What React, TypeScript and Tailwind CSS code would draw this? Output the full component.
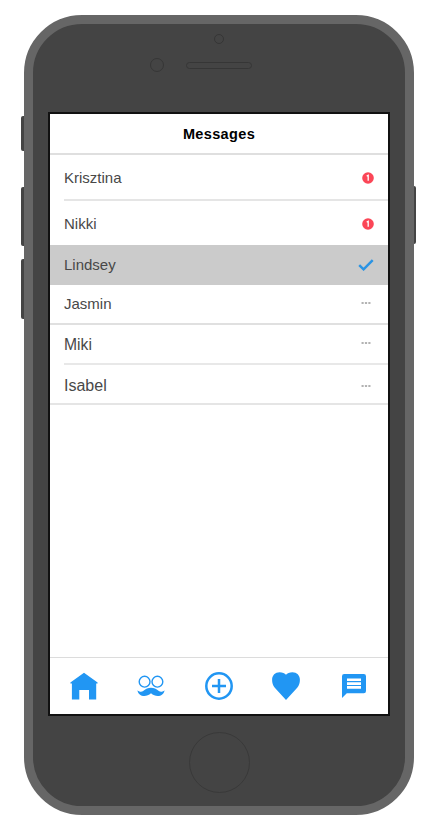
import type { ReactNode } from "react";

function Unread() {
  return (
    <svg width="12" height="12" viewBox="0 0 12 12" className="mr-px">
      <circle cx="6" cy="6" r="5.8" fill="#fb4657" />
      <path d="M4.7 4.1 6.2 3.3V8.8" fill="none" stroke="#fff" strokeWidth="1.3" />
    </svg>
  );
}

function Check() {
  return (
    <svg width="16" height="12" viewBox="0 0 16 12" className="mr-px" fill="none">
      <path d="M1.2 6.1 5.6 10.3 14.7 1.2" stroke="#2b94e4" strokeWidth="2.5" />
    </svg>
  );
}

function Dots({ className = "" }: { className?: string }) {
  return (
    <svg width="10" height="4" viewBox="0 0 10 4" className={`mr-1 ${className}`} fill="#b2b2b2">
      <rect x="0.5" y="1" width="2.2" height="2" rx="0.5" />
      <rect x="3.9" y="1" width="2.2" height="2" rx="0.5" />
      <rect x="7.3" y="1" width="2.2" height="2" rx="0.5" />
    </svg>
  );
}

function Row({ name, row, line, text = "text-[15px]", children }: { name: string; row: string; line: string; text?: string; children: ReactNode }) {
  return (
    <div className={`flex shrink-0 flex-col ${row}`}>
      <div className="flex flex-1 items-center justify-between pl-[14px] pr-[13px]">
        <span className={`leading-4 text-[#484848] ${text}`}>{name}</span>
        {children}
      </div>
      <div className={line} />
    </div>
  );
}

function Tab({ children }: { children: ReactNode }) {
  return <div className="flex w-[67.5px] items-center justify-center">{children}</div>;
}

export default function App() {
  return (
    <div className="h-[832px] w-[444px] overflow-hidden bg-white pl-6 pt-[15px] font-['Liberation_Sans',Arial,sans-serif]">
      <div className="relative h-[800px] w-[390px] rounded-[58px] border-[9px] border-[#666] bg-[#444]">
        <div className="absolute -left-3 top-[92px] h-[35px] w-[3px] rounded-l-[2px] bg-[#444]" />
        <div className="absolute -left-3 top-[163px] h-[59px] w-[3px] rounded-l-[2px] bg-[#444]" />
        <div className="absolute -left-3 top-[235px] h-[60px] w-[3px] rounded-l-[2px] bg-[#444]" />
        <div className="absolute -right-[11px] top-[162px] h-[58px] w-[2px] rounded-r-[2px] bg-[#444]" />

        <div className="flex h-[88px] flex-col items-center pt-[10px]">
          <div className="size-[10px] rounded-full border border-[#363636]" />
          <div className="mt-[14px] flex w-full items-center pl-[117px]">
            <div className="size-[14px] rounded-full border border-[#363636]" />
            <div className="ml-[22px] h-[7px] w-[66px] rounded-full border border-[#363636]" />
          </div>
        </div>

        <div className="ml-[15px] flex h-[604px] w-[342px] flex-col border-2 border-[#111] bg-white">
          <div className="flex h-[41px] shrink-0 items-center justify-center border-b-2 border-[#dfdfdf]">
            <h1 className="text-[14.5px] font-bold leading-4 tracking-[0.36px] text-black">Messages</h1>
          </div>
          <div className="flex flex-1 flex-col">
            <Row name="Krisztina" row="h-[46px] pt-px" line="ml-[14px] h-[2px] bg-[#e5e5e5]"><Unread /></Row>
            <Row name="Nikki" row="h-[44px] pt-px" line="h-0"><Unread /></Row>
            <Row name="Lindsey" row="h-10 bg-[#cbcbcb]" line="h-0"><Check /></Row>
            <Row name="Jasmin" row="h-10" line="h-[2px] bg-[#e0e0e0]"><Dots className="mb-0.5" /></Row>
            <Row name="Miki" row="h-10 pt-px" line="ml-[14px] h-[2px] bg-[#e8e8e8]" text="text-[15.7px] pt-px"><Dots className="mb-[3px]" /></Row>
            <Row name="Isabel" row="h-10" line="h-[2px] bg-[#e5e5e5]" text="text-[16px] pt-[3px]"><Dots className="mt-[3px]" /></Row>
          </div>
          <nav className="flex h-[57px] shrink-0 border-t border-[#dcdcdc]">
            <Tab>
              <svg width="28" height="28" viewBox="0 0 28 28" fill="#2196f3">
                <path d="M14 .8 27.6 10.6V11.6H26.2V27.5H19V18H9.3V27.5H1.9V11.6H.4V10.6Z" />
              </svg>
            </Tab>
            <Tab>
              <svg width="28" height="22" viewBox="0 0 28 22" fill="none" stroke="#2196f3">
                <circle cx="7.6" cy="6.7" r="5.4" strokeWidth="1.4" />
                <circle cx="20.4" cy="6.7" r="5.4" strokeWidth="1.4" />
                <path d="M14 12.8C11 12.8 8.8 13.8 6.5 15.8 4.5 17.2 2.2 16.9.4 15.2 1.3 21.3 8.8 23 14 18.2 19.2 23 26.7 21.3 27.6 15.2 25.8 16.9 23.5 17.2 21.5 15.8 19.2 13.8 17 12.8 14 12.8Z" fill="#2196f3" stroke="none" />
              </svg>
            </Tab>
            <Tab>
              <svg width="28" height="28" viewBox="0 0 28 28" fill="none" stroke="#2196f3" strokeWidth="2.5">
                <circle cx="14" cy="14" r="12.7" />
                <path d="M14 7v14M7 14h14" />
              </svg>
            </Tab>
            <Tab>
              <svg width="28" height="28" viewBox="0 0 28 28" fill="#2196f3">
                <path d="M14 28 2.8 15.8C.9 13.3.1 10.9.1 7.7.1 3.3 3.2.3 7.6.3 10.5.3 12.7 1.2 14 2.8 15.3 1.2 17.5.3 20.4.3 24.8.3 27.9 3.3 27.9 7.7 27.9 10.9 27.1 13.3 25.2 15.8Z" />
              </svg>
            </Tab>
            <Tab>
              <svg width="24" height="24" viewBox="0 0 24 24">
                <path d="M2.2 0H21.8Q24 0 24 2.2V17Q24 19.2 21.8 19.2H4.8L0 24V2.2Q0 0 2.2 0Z" fill="#2196f3" />
                <path d="M5 5.7h14M5 9.6h14M5 13.4h14" stroke="#fff" strokeWidth="2.6" />
              </svg>
            </Tab>
          </nav>
        </div>

        <div className="ml-[156px] mt-4 size-[61px] rounded-full border border-[#393939]" />
      </div>
    </div>
  );
}
